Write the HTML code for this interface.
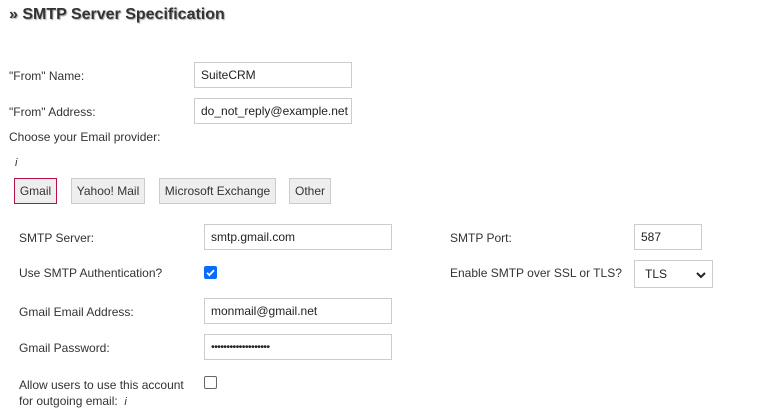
<!DOCTYPE html>
<html><head><style>
body{margin:0;width:763px;height:419px;background:#fff;font-family:"Liberation Sans",Arial,sans-serif;font-size:12px;color:#333;position:relative;overflow:hidden}
.a{position:absolute;white-space:nowrap}
h1{position:absolute;left:9px;top:6px;margin:0;font-size:16px;font-weight:bold;color:#333;text-shadow:1px 1px 1px #aaa}
.in{position:absolute;border:1px solid #ccc;box-sizing:border-box;background:#fff;font-size:12px;color:#222;padding-left:6px;line-height:24px;overflow:hidden;white-space:nowrap}
.btn{position:absolute;top:178px;height:26px;box-sizing:border-box;border:1px solid #ccc;background:#eee;font-size:12px;color:#333;line-height:24px;text-align:center}
.cb{position:absolute;width:13px;height:13px;box-sizing:border-box;border-radius:2px}
</style></head><body>
<h1>» SMTP Server Specification</h1>
<div class="a" style="left:9px;top:69px">"From" Name:</div>
<div class="in" style="left:194px;top:62px;width:158px;height:26px">SuiteCRM</div>
<div class="a" style="left:9px;top:105px">"From" Address:</div>
<div class="in" style="left:194px;top:98px;width:158px;height:26px">do_not_reply@example.net</div>
<div class="a" style="left:9px;top:130px">Choose your Email provider:</div>
<div class="a" style="left:15px;top:157px;font-style:italic;font-size:11px">i</div>
<div class="btn" style="left:14px;width:43px;border-color:#b5124a">Gmail</div>
<div class="btn" style="left:71px;width:74px">Yahoo! Mail</div>
<div class="btn" style="left:159px;width:117px">Microsoft Exchange</div>
<div class="btn" style="left:289px;width:42px">Other</div>
<div class="a" style="left:19px;top:231px">SMTP Server:</div>
<div class="in" style="left:204px;top:224px;width:188px;height:26px">smtp.gmail.com</div>
<div class="a" style="left:450px;top:231px">SMTP Port:</div>
<div class="in" style="left:634px;top:224px;width:68px;height:26px">587</div>
<div class="a" style="left:19px;top:266px">Use SMTP Authentication?</div>
<div class="cb" style="left:204px;top:266px;background:#0a6cff"><svg width="13" height="13" viewBox="0 0 13 13" style="position:absolute;left:0;top:0"><path d="M3 6.8l2.3 2.3L10 4.2" stroke="#fff" stroke-width="1.8" fill="none"/></svg></div>
<div class="a" style="left:450px;top:266px">Enable SMTP over SSL or TLS?</div>
<div class="in" style="left:634px;top:260px;width:79px;height:28px;line-height:26px;padding-left:10px">TLS<svg width="10" height="8" viewBox="0 0 10 8" style="position:absolute;right:6px;top:10px"><path d="M1 2l4 4 4-4" stroke="#222" stroke-width="2" fill="none"/></svg></div>
<div class="a" style="left:19px;top:305px">Gmail Email Address:</div>
<div class="in" style="left:204px;top:298px;width:188px;height:26px">monmail@gmail.net</div>
<div class="a" style="left:19px;top:341px">Gmail Password:</div>
<div class="in" style="left:204px;top:334px;width:188px;height:26px;font-size:10.5px;letter-spacing:-0.6px">•••••••••••••••••••</div>
<div class="a" style="left:19px;top:377px;line-height:16px">Allow users to use this account<br>for outgoing email: &nbsp;<i style="font-size:11px">i</i></div>
<div class="cb" style="left:204px;top:376px;border:1px solid #666;background:#fff"></div>
</body></html>
